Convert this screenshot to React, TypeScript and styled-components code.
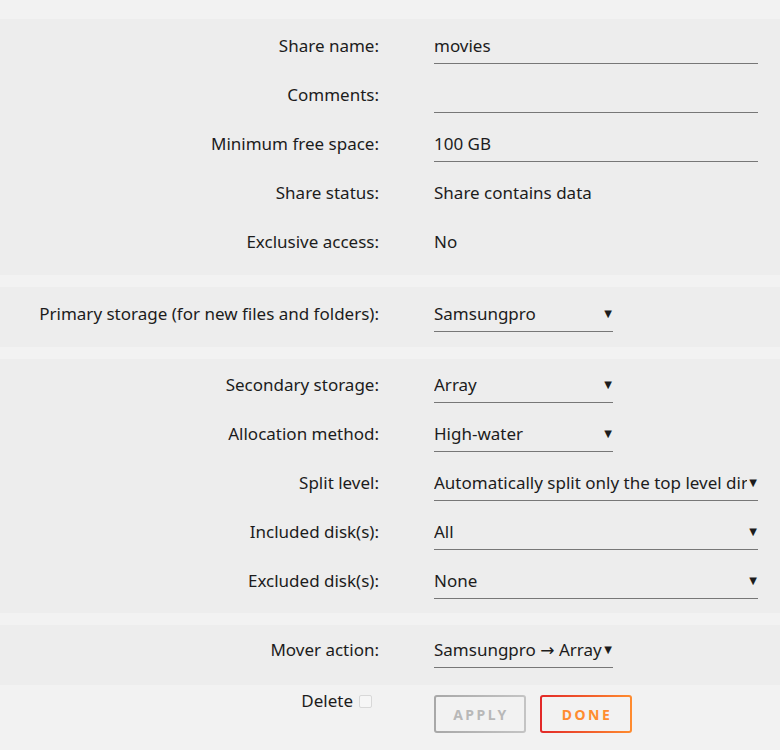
import React from 'react';
import styled, { createGlobalStyle } from 'styled-components';

const GlobalStyle = createGlobalStyle`
  html, body {
    margin: 0;
    padding: 0;
    background: #f2f2f2;
    font-family: "Noto Sans", "DejaVu Sans", sans-serif;
    color: #1c1c1c;
  }
`;

const Page = styled.div`
  width: 780px;
  height: 750px;
  padding-top: 19px;
  box-sizing: border-box;
  overflow: hidden;
`;

const Section = styled.div<{ $pad?: string; $last?: boolean }>`
  background: #ededed;
  padding: ${(p) => p.$pad || '0'};
  margin-bottom: ${(p) => (p.$last ? 0 : 12)}px;
`;

const Row = styled.div`
  display: grid;
  grid-template-columns: 379px 1fr;
  column-gap: 55px;
  align-items: center;
  height: 49px;
  font-size: 17px;
  line-height: 23px;
`;

const Label = styled.div`
  text-align: right;
  white-space: nowrap;
`;

const Value = styled.div`
  white-space: nowrap;
`;

const Field = styled.div<{ $w: number }>`
  position: relative;
  width: ${(p) => p.$w}px;
  height: 34px;
  box-sizing: border-box;
  padding-top: 4px;
  border-bottom: 1.5px solid #777;
  margin-top: 3px;
`;

const FieldText = styled.div`
  overflow: hidden;
  white-space: nowrap;
  margin-right: 11px;
`;

const Arrow = styled.span`
  position: absolute;
  right: 1px;
  top: 4px;
  font-size: 10px;
  color: #1c1c1c;
`;

const Footer = styled.div`
  display: grid;
  grid-template-columns: 372px 1fr;
  column-gap: 62px;
  font-size: 17px;
`;

const DeleteLabel = styled.label`
  display: flex;
  align-items: center;
  justify-content: flex-end;
  gap: 6px;
  padding-top: 4px;
  height: 23px;
`;

const Check = styled.span`
  display: inline-block;
  width: 11px;
  height: 11px;
  border: 1px solid #d8d8d8;
  border-radius: 2px;
  background: #f6f6f6;
  margin-top: 2px;
`;

const Buttons = styled.div`
  display: flex;
  gap: 14px;
  padding-top: 10px;
`;

const Button = styled.button<{ $primary?: boolean }>`
  width: 92px;
  height: 38px;
  border-radius: 3px;
  border: 2px solid transparent;
  background:
    linear-gradient(#f2f2f2, #f2f2f2) padding-box,
    ${(p) =>
      p.$primary
        ? 'linear-gradient(90deg, #e22828, #ff8c2f)'
        : 'linear-gradient(90deg, #a8a8a8, #c4c4c4)'} border-box;
  color: ${(p) => (p.$primary ? '#ff8c2f' : '#b8b8b8')};
  font-family: "Noto Sans", sans-serif;
  font-weight: 700;
  font-size: 14px;
  letter-spacing: 2.5px;
  padding: 0 0 0 2px;
  cursor: pointer;
`;

const TextField = ({ value, w = 324 }: { value: string; w?: number }) => (
  <Field $w={w}>
    <FieldText>{value}</FieldText>
  </Field>
);

const Select = ({ value, w = 179 }: { value: string; w?: number }) => (
  <Field $w={w}>
    <FieldText>{value}</FieldText>
    <Arrow>▼</Arrow>
  </Field>
);

export default function App() {
  return (
    <Page>
      <GlobalStyle />
      <Section $pad="2px 0 9px">
        <Row>
          <Label>Share name:</Label>
          <TextField value="movies" />
        </Row>
        <Row>
          <Label>Comments:</Label>
          <TextField value="" />
        </Row>
        <Row>
          <Label>Minimum free space:</Label>
          <TextField value="100 GB" />
        </Row>
        <Row>
          <Label>Share status:</Label>
          <Value>Share contains data</Value>
        </Row>
        <Row>
          <Label>Exclusive access:</Label>
          <Value>No</Value>
        </Row>
      </Section>
      <Section $pad="2px 0 9px">
        <Row>
          <Label>Primary storage (for new files and folders):</Label>
          <Select value="Samsungpro" />
        </Row>
      </Section>
      <Section $pad="1px 0 8px">
        <Row>
          <Label>Secondary storage:</Label>
          <Select value="Array" />
        </Row>
        <Row>
          <Label>Allocation method:</Label>
          <Select value="High-water" />
        </Row>
        <Row>
          <Label>Split level:</Label>
          <Select w={324} value="Automatically split only the top level directory as required" />
        </Row>
        <Row>
          <Label>Included disk(s):</Label>
          <Select w={324} value="All" />
        </Row>
        <Row>
          <Label>Excluded disk(s):</Label>
          <Select w={324} value="None" />
        </Row>
      </Section>
      <Section $pad="0 0 11px" $last>
        <Row>
          <Label>Mover action:</Label>
          <Select value="Samsungpro → Array" />
        </Row>
      </Section>
      <Footer>
        <DeleteLabel>
          Delete <Check />
        </DeleteLabel>
        <Buttons>
          <Button>APPLY</Button>
          <Button $primary>DONE</Button>
        </Buttons>
      </Footer>
    </Page>
  );
}
